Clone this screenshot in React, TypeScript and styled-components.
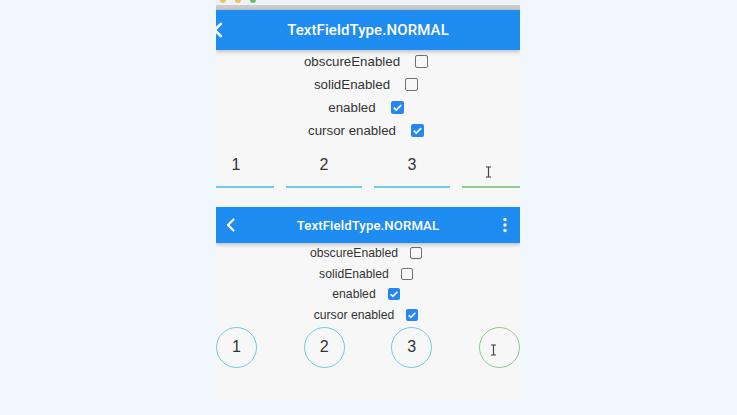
import React from "react";
import styled, { createGlobalStyle } from "styled-components";

const Global = createGlobalStyle`
  html, body { margin: 0; padding: 0; }
  body {
    background: #f1f8fd;
    font-family: "Liberation Sans", Arial, sans-serif;
    color: #333;
    width: 737px;
    height: 415px;
    overflow: hidden;
  }
`;

const Page = styled.div`
  width: 737px;
  height: 415px;
  display: flex;
  justify-content: flex-start;
  padding-left: 216px;
  box-sizing: border-box;
`;

const Panel = styled.div`
  width: 304px;
  height: 400px;
  background: #f7f7f7;
  display: flex;
  flex-direction: column;
  overflow: hidden;
`;

const Chrome = styled.div`
  height: 10px;
  flex: none;
  display: flex;
  align-items: flex-start;
  gap: 9px;
  padding-left: 4px;
  background: linear-gradient(to bottom, #eef3f7 0, #eef3f7 5px, #cfcfcf 5px, #c4c4c4 10px);
`;

const Dot = styled.span<{ $c: string }>`
  width: 6px;
  height: 3px;
  border-radius: 0 0 3px 3px;
  background: ${(p) => p.$c};
  opacity: 0.8;
`;

const Bar = styled.div<{ $h: number }>`
  height: ${(p) => p.$h}px;
  flex: none;
  background: #1f8cf1;
  color: #fff;
  display: flex;
  align-items: center;
  position: relative;
  z-index: 1;
  box-shadow: 0 2px 4px rgba(0, 0, 0, 0.22);
`;

const Title = styled.div<{ $size: number }>`
  flex: 1;
  text-align: center;
  font-family: Roboto, "Liberation Sans", sans-serif;
  font-size: ${(p) => p.$size}px;
  font-weight: 500;
  letter-spacing: 0.1px;
`;

const IconSlot = styled.div<{ $w: number; $shift?: number }>`
  width: ${(p) => p.$w}px;
  display: flex;
  align-items: center;
  justify-content: center;
  margin-left: ${(p) => p.$shift ?? 0}px;
`;

const Options = styled.div<{ $row: number; $size: number; $gap: number }>`
  display: flex;
  flex-direction: column;
  align-items: center;
  padding-right: 4px;
  font-size: ${(p) => p.$size}px;
  & > div {
    height: ${(p) => p.$row}px;
    gap: ${(p) => p.$gap}px;
  }
`;

const OptionRow = styled.div`
  display: flex;
  align-items: center;
`;

const Box = styled.span<{ $on: boolean; $s: number }>`
  width: ${(p) => p.$s}px;
  height: ${(p) => p.$s}px;
  box-sizing: border-box;
  border-radius: 2px;
  border: ${(p) => (p.$on ? "none" : "1.6px solid #707070")};
  background: ${(p) => (p.$on ? "#2487f2" : "transparent")};
  display: flex;
  align-items: center;
  justify-content: center;
`;

const FieldsLine = styled.div`
  display: flex;
  gap: 12px;
  margin: 0 -18px;
  height: 46px;
  flex: none;
`;

const LineField = styled.div<{ $c: string }>`
  width: 76px;
  flex: none;
  box-sizing: border-box;
  border-bottom: 2px solid ${(p) => p.$c};
  padding-top: 13px;
  text-align: center;
  font-size: 16px;
  line-height: 20px;
  color: #333;
  position: relative;
`;

const Spacer = styled.div<{ $h: number }>`
  height: ${(p) => p.$h}px;
  flex: none;
`;

const CircleLine = styled.div`
  display: flex;
  justify-content: space-between;
  padding-top: 1.5px;
`;

const Circle = styled.div<{ $c: string }>`
  width: 41px;
  height: 41px;
  box-sizing: border-box;
  border-radius: 50%;
  border: 1.5px solid ${(p) => p.$c};
  display: flex;
  align-items: center;
  justify-content: center;
  font-size: 16px;
  color: #333;
  position: relative;
`;

const Cursor = styled.svg<{ $x: number; $y: number }>`
  position: absolute;
  left: ${(p) => p.$x}px;
  top: ${(p) => p.$y}px;
`;

const IBeam = ({ x, y }: { x: number; y: number }) => (
  <Cursor $x={x} $y={y} width="7" height="12" viewBox="0 0 7 12">
    <path d="M1 1h2l0.5 0.5L4 1h2M3.5 1.5v9M1 11h2l0.5-0.5L4 11h2" stroke="#444" strokeWidth="1.2" fill="none" />
  </Cursor>
);

const Check = ({ s }: { s: number }) => (
  <svg width={s} height={s} viewBox="0 0 14 14">
    <path d="M3 7.2l2.6 2.6L11 4.4" stroke="#fff" strokeWidth="1.8" fill="none" />
  </svg>
);

const Chevron = ({ size }: { size: number }) => (
  <svg width={size} height={size} viewBox="0 0 16 16">
    <path d="M10.5 2.5L5 8l5.5 5.5" stroke="#fff" strokeWidth="2.2" fill="none" strokeLinecap="round" strokeLinejoin="round" />
  </svg>
);

const MoreVert = () => (
  <svg width="4" height="16" viewBox="0 0 4 16">
    <circle cx="2" cy="2.5" r="1.7" fill="#fff" />
    <circle cx="2" cy="8" r="1.7" fill="#fff" />
    <circle cx="2" cy="13.5" r="1.7" fill="#fff" />
  </svg>
);

const options: [string, boolean][] = [
  ["obscureEnabled", false],
  ["solidEnabled", false],
  ["enabled", true],
  ["cursor enabled", true],
];

const blue = "#6ccbe6";
const green = "#8ec98d";

export default function App() {
  return (
    <>
      <Global />
      <Page>
        <Panel>
          <Chrome>
            <Dot $c="#e8b83a" />
            <Dot $c="#e8b83a" />
            <Dot $c="#4cae4a" />
          </Chrome>
          <Bar $h={40}>
            <IconSlot $w={20} $shift={-8}>
              <Chevron size={18} />
            </IconSlot>
            <Title $size={15}>TextFieldType.NORMAL</Title>
            <IconSlot $w={12} />
          </Bar>
          <Options $row={23} $size={13.3} $gap={15}>
            {options.map(([label, on]) => (
              <OptionRow key={label}>
                <span>{label}</span>
                <Box $on={on} $s={13}>{on && <Check s={13} />}</Box>
              </OptionRow>
            ))}
          </Options>
          <FieldsLine>
            <LineField $c={blue}>1</LineField>
            <LineField $c={blue}>2</LineField>
            <LineField $c={blue}>3</LineField>
            <LineField $c={green}>
              <IBeam x={23} y={24} />
            </LineField>
          </FieldsLine>
          <Spacer $h={19} />
          <Bar $h={36}>
            <IconSlot $w={30}>
              <Chevron size={16} />
            </IconSlot>
            <Title $size={13.2}>TextFieldType.NORMAL</Title>
            <IconSlot $w={30}>
              <MoreVert />
            </IconSlot>
          </Bar>
          <Options $row={20.5} $size={12.2} $gap={12}>
            {options.map(([label, on]) => (
              <OptionRow key={label}>
                <span>{label}</span>
                <Box $on={on} $s={12}>{on && <Check s={12} />}</Box>
              </OptionRow>
            ))}
          </Options>
          <CircleLine>
            <Circle $c={blue}>1</Circle>
            <Circle $c={blue}>2</Circle>
            <Circle $c={blue}>3</Circle>
            <Circle $c={green}>
              <IBeam x={10} y={16} />
            </Circle>
          </CircleLine>
        </Panel>
      </Page>
    </>
  );
}
